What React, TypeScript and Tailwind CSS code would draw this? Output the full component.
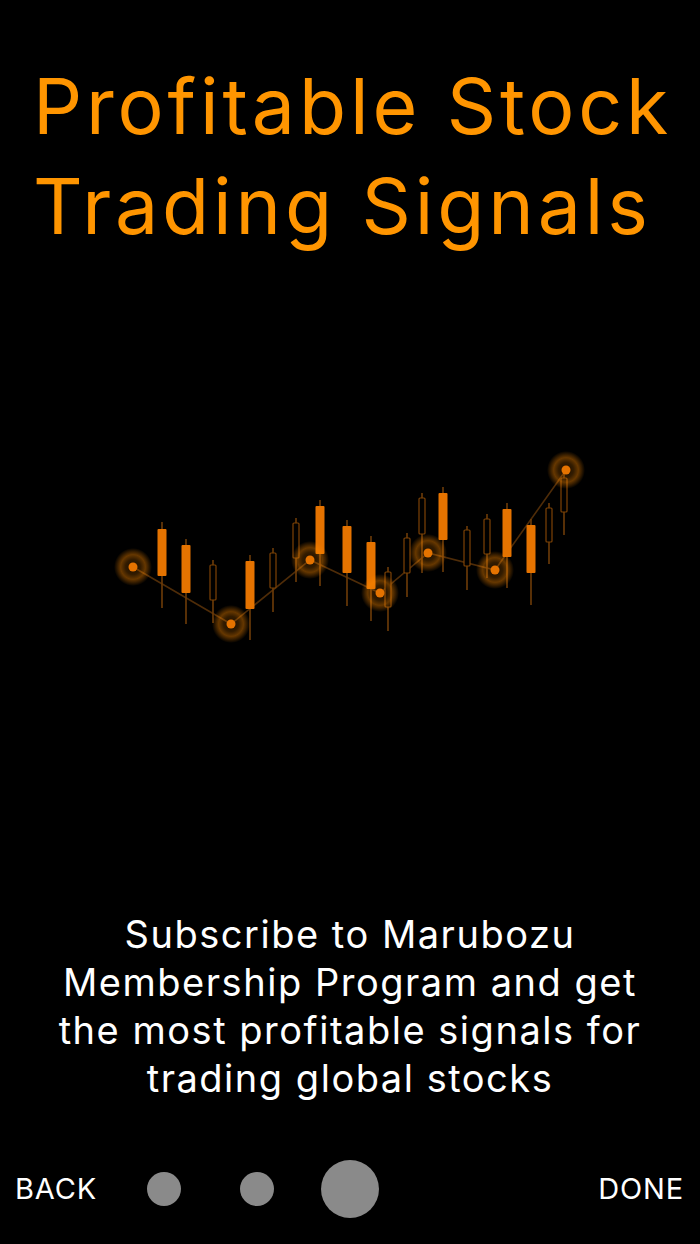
import React from "react";

type Candle = { x: number; top: number; bottom: number; hi: number; lo: number; filled: boolean };

const candles: Candle[] = [
  { x: 162, top: 529, bottom: 576, hi: 522, lo: 608, filled: true },
  { x: 186, top: 545, bottom: 593, hi: 539, lo: 624, filled: true },
  { x: 213, top: 565, bottom: 600, hi: 560, lo: 623, filled: false },
  { x: 250, top: 561, bottom: 609, hi: 555, lo: 640, filled: true },
  { x: 273, top: 553, bottom: 588, hi: 548, lo: 612, filled: false },
  { x: 296, top: 523, bottom: 558, hi: 518, lo: 582, filled: false },
  { x: 320, top: 506, bottom: 554, hi: 500, lo: 586, filled: true },
  { x: 347, top: 526, bottom: 573, hi: 520, lo: 606, filled: true },
  { x: 371, top: 542, bottom: 589, hi: 536, lo: 621, filled: true },
  { x: 388, top: 572, bottom: 607, hi: 567, lo: 631, filled: false },
  { x: 407, top: 538, bottom: 573, hi: 533, lo: 597, filled: false },
  { x: 422, top: 498, bottom: 534, hi: 493, lo: 573, filled: false },
  { x: 443, top: 493, bottom: 540, hi: 487, lo: 572, filled: true },
  { x: 467, top: 530, bottom: 566, hi: 526, lo: 590, filled: false },
  { x: 487, top: 519, bottom: 554, hi: 514, lo: 578, filled: false },
  { x: 507, top: 509, bottom: 557, hi: 503, lo: 588, filled: true },
  { x: 531, top: 525, bottom: 573, hi: 519, lo: 605, filled: true },
  { x: 549, top: 508, bottom: 542, hi: 503, lo: 564, filled: false },
  { x: 564, top: 478, bottom: 512, hi: 473, lo: 535, filled: false },
];

const points = [
  [133, 567],
  [231, 624],
  [310, 560],
  [380, 593],
  [428, 553],
  [495, 570],
  [566, 470],
];

function Chart() {
  return (
    <svg width="700" height="220" viewBox="0 440 700 220" className="block">
      <defs>
        <radialGradient id="glow">
          <stop offset="0%" stopColor="#ff8a00" stopOpacity="0.1" />
          <stop offset="40%" stopColor="#ff8a00" stopOpacity="0.2" />
          <stop offset="65%" stopColor="#ff8a00" stopOpacity="0.4" />
          <stop offset="100%" stopColor="#ff8a00" stopOpacity="0" />
        </radialGradient>
      </defs>
      <polyline
        points={points.map((p) => p.join(",")).join(" ")}
        fill="none"
        stroke="#4f2c08"
        strokeWidth="1.6"
      />
      {candles.map((c, i) => (
        <g key={i}>
          <line x1={c.x} x2={c.x} y1={c.hi} y2={c.lo} stroke="#6e3c08" strokeWidth="1.6" />
          {c.filled ? (
            <rect x={c.x - 4.5} y={c.top} width="9" height={c.bottom - c.top} rx="1" fill="#e57300" />
          ) : (
            <rect
              x={c.x - 3}
              y={c.top}
              width="6"
              height={c.bottom - c.top}
              rx="1"
              fill="#000"
              stroke="#7d4205"
              strokeWidth="1.2"
            />
          )}
        </g>
      ))}
      {points.map(([x, y], i) => (
        <g key={i}>
          <circle cx={x} cy={y} r="19" fill="url(#glow)" />
          <circle cx={x} cy={y} r="4.5" fill="#e57300" />
        </g>
      ))}
    </svg>
  );
}

export default function App() {
  return (
    <div
      className="h-[1244px] w-[700px] bg-black flex flex-col overflow-hidden"
      style={{ fontFamily: "Inter, 'Noto Sans', sans-serif" }}
    >
      <h1 className="pt-[56px] pl-[33px] text-[77px] leading-[100px] tracking-[0.05em] text-[#ff9500] font-normal whitespace-nowrap">
        Profitable Stock
        <br />
        Trading Signals
      </h1>
      <div className="mt-[184px]">
        <Chart />
      </div>
      <p className="mt-[250px] text-center text-white text-[38px] leading-[48px] tracking-[0.04em]">
        Subscribe to Marubozu
        <br />
        Membership Program and get
        <br />
        the most profitable signals for
        <br />
        trading global stocks
      </p>
      <div className="mt-[57px] h-[60px] flex items-center pl-[15px] pr-[16px]">
        <div className="w-[132px] text-white text-[29px] tracking-[0.03em]">BACK</div>
        <div className="w-[34px] h-[34px] rounded-full bg-[#8a8a8a]" />
        <div className="ml-[59px] w-[34px] h-[34px] rounded-full bg-[#8a8a8a]" />
        <div className="ml-[47px] w-[58px] h-[58px] rounded-full bg-[#8a8a8a]" />
        <div className="flex-1" />
        <div className="text-white text-[29px] tracking-[0.03em]">DONE</div>
      </div>
    </div>
  );
}
